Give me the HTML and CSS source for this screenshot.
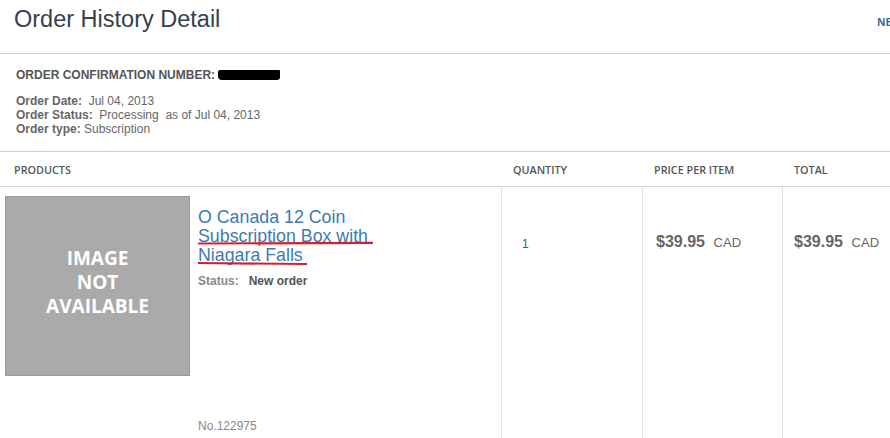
FILE: index.html
```html
<!DOCTYPE html>
<html>
<head>
<meta charset="utf-8">
<link rel="stylesheet" href="styles.css">
</head>
<body>
<div class="page">
  <header class="head">
    <h1 class="title">Order History Detail</h1>
    <a class="nav">NE</a>
  </header>
  <section class="info">
    <div class="conf">ORDER CONFIRMATION NUMBER: <span class="redact"></span></div>
    <div class="meta">
      <div><b>Order Date:</b>&nbsp; Jul 04, 2013</div>
      <div><b>Order Status:</b>&nbsp; Processing &nbsp;as of Jul 04, 2013</div>
      <div><b>Order type:</b> Subscription</div>
    </div>
  </section>
  <div class="table">
    <div class="th th-prod">PRODUCTS</div>
    <div class="th">QUANTITY</div>
    <div class="th">PRICE PER ITEM</div>
    <div class="th">TOTAL</div>

    <div class="td td-prod">
      <div class="noimg"><span class="noimg-text">IMAGE<br>NOT<br>AVAILABLE</span></div>
      <div class="details">
        <a class="pname">O Canada 12 Coin Subscription Box with Niagara Falls</a>
        <svg class="marks" width="190" height="30" viewBox="0 0 190 30">
          <path d="M1 4.5 L176 3.8" stroke="#d4202c" stroke-width="2.2" fill="none"/>
          <path d="M1 24 L110 25" stroke="#d4202c" stroke-width="2.2" fill="none"/>
        </svg>
        <div class="status"><span class="slabel">Status:</span>&nbsp;&nbsp; <b>New order</b></div>
        <div class="sku">No.122975</div>
      </div>
    </div>
    <div class="td td-qty">1</div>
    <div class="td td-price"><span class="amt">$39.95</span>&nbsp; <span class="cur">CAD</span></div>
    <div class="td td-total"><span class="amt">$39.95</span>&nbsp; <span class="cur">CAD</span></div>
  </div>
</div>
</body>
</html>
```
FILE: styles.css
```css
html, body {
  margin: 0;
  padding: 0;
  background: #fff;
  overflow: hidden;
}
.page {
  width: 890px;
  height: 438px;
  overflow: hidden;
  font-family: "Liberation Sans", Arial, sans-serif;
  color: #555;
}
.head {
  display: flex;
  align-items: flex-start;
  height: 53px;
  border-bottom: 1px solid #cfcfcf;
}
.title {
  flex: 0 0 877px;
  margin: 0;
  padding: 4px 0 0 14px;
  box-sizing: border-box;
  font-weight: normal;
  font-size: 23.5px;
  line-height: 30px;
  color: #36414b;
}
.nav {
  padding-top: 15px;
  font-family: "Open Sans", sans-serif;
  font-weight: 700;
  font-size: 10.5px;
  color: #3a6a96;
  white-space: nowrap;
}
.info {
  padding: 14px 0 0 16px;
  height: 83px;
  border-bottom: 1px solid #cfcfcf;
  font-size: 12px;
  line-height: 14px;
}
.conf {
  font-weight: bold;
  color: #555;
  display: flex;
  align-items: center;
}
.redact {
  display: inline-block;
  width: 62px;
  height: 10px;
  background: #000;
  margin-left: 3px;
  border-radius: 2px 1px 3px 4px;
}
.meta {
  margin-top: 12px;
  color: #666;
}
.meta b {
  color: #666;
}
.table {
  display: grid;
  grid-template-columns: 501px 141px 140px 1fr;
}
.th {
  height: 35px;
  box-sizing: border-box;
  padding: 11px 0 0 12px;
  border-bottom: 1px solid #d6d6d6;
  font-family: "Open Sans", sans-serif;
  font-weight: 600;
  font-size: 10.8px;
  line-height: 14px;
  color: #555;
}
.th-prod {
  padding-left: 14px;
}
.td {
  height: 260px;
  border-left: 1px solid #e2e2e2;
  font-size: 12px;
}
.td-prod {
  border-left: none;
  display: flex;
  padding: 9px 0 0 5px;
}
.noimg {
  width: 183px;
  height: 178px;
  background: #aaa;
  border: 1px solid #999;
  color: #fff;
  font-family: "Open Sans", sans-serif;
  font-weight: 700;
  font-size: 19px;
  line-height: 24px;
  text-align: center;
  display: flex;
  align-items: center;
  justify-content: center;
}
.noimg-text {
  margin-bottom: 8px;
}
.details {
  position: relative;
  width: 190px;
  padding: 12px 0 0 8px;
}
.pname {
  display: block;
  font-size: 17.8px;
  line-height: 19px;
  color: #3c7bb0;
}
.marks {
  position: absolute;
  left: 7px;
  top: 43px;
}
.status {
  margin-top: 9px;
  font-size: 12px;
  line-height: 14px;
}
.slabel {
  font-weight: bold;
  color: #888;
}
.status b {
  color: #555;
}
.sku {
  margin-top: 131px;
  color: #888;
  font-size: 12px;
}
.td-qty {
  padding: 50px 0 0 20px;
  color: #555;
}
.td-price {
  padding: 46px 0 0 13px;
}
.td-total {
  padding: 46px 0 0 11px;
}
.amt {
  font-weight: bold;
  font-size: 16px;
  color: #666;
}
.cur {
  font-size: 13px;
  color: #666;
  margin-left: 2px;
}
```
